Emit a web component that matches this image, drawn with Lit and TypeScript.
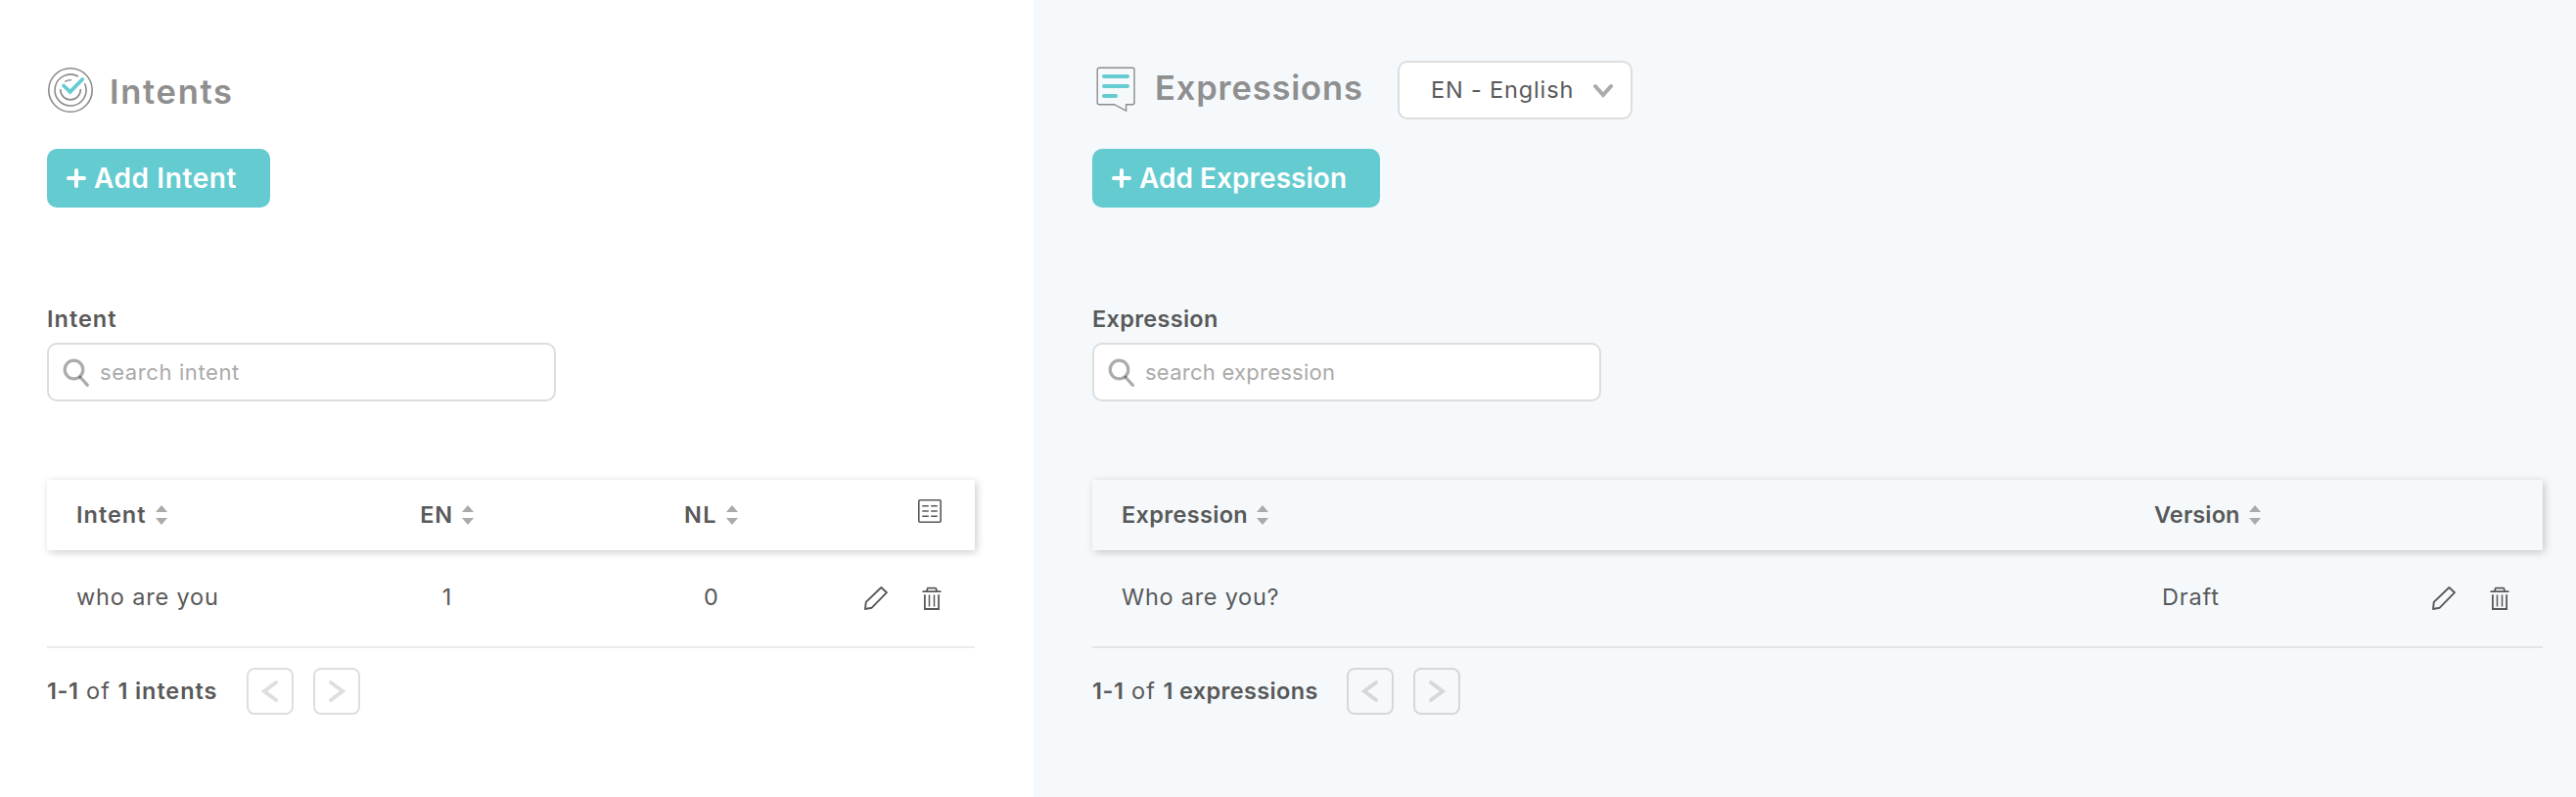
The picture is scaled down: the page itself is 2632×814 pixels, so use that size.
import { LitElement, html, svg, css } from 'lit';
import { customElement, property } from 'lit/decorators.js';
import { styleMap } from 'lit/directives/style-map.js';

/** A run of text with its own tracking. */
const t = (text: string, tracking: number, cls = '') =>
  html`<span class=${cls} style=${styleMap({ letterSpacing: `${tracking}px` })}>${text}</span>`;

const targetIcon = html`<svg width="48" height="48" viewBox="0 0 48 48" fill="none" stroke="#8c8c8c" stroke-width="1.6" stroke-linecap="round">
  <circle cx="24" cy="24" r="22.2" />
  <path d="M38.8 17.8A16 16 0 1 1 31.4 9.8" />
  <path d="M34.3 23.6A10.3 10.3 0 1 1 13.7 23.6M18.8 15.1A10.3 10.3 0 0 1 24.3 13.7" />
  <path d="M17 19.5 23.7 25.9 36.2 13" stroke="#64cbd0" stroke-width="3.8" stroke-linejoin="miter" />
</svg>`;

const noteIcon = html`<svg width="48" height="48" viewBox="0 0 48 48" fill="none" stroke="#8c8c8c" stroke-width="1.4">
  <path d="M7.2 1.2H41a2 2 0 0 1 2 2V36.7a2 2 0 0 1-2 2H34.6V45L22.4 38.7H7.2a2 2 0 0 1-2-2V3.2a2 2 0 0 1 2-2Z" />
  <path d="M12 10H36M12 20H36M12 30H24" stroke="#64cbd0" stroke-width="4" stroke-linecap="round" />
</svg>`;

const plusIcon = html`<svg width="20" height="20" viewBox="0 0 20 20" fill="none" stroke="#fff" stroke-width="4" stroke-linecap="round">
  <path d="M10 2V18M2 10H18" />
</svg>`;

const searchIcon = html`<svg width="28" height="30" viewBox="0 0 28 30" fill="none" stroke="#000" stroke-opacity=".33">
  <circle cx="11.5" cy="11.5" r="9.3" stroke-width="3.2" />
  <path d="M18 19.2 25.4 27.4" stroke-width="3.2" stroke-linecap="round" />
</svg>`;

const pencilIcon = html`<svg width="24" height="24" viewBox="0 0 24 24" fill="none" stroke="#595959" stroke-width="1.9" stroke-linejoin="round">
  <path d="M1 23 1.8 15.9 17.4 1 23 6.2 7.8 21.7Z" />
</svg>`;

const trashIcon = html`<svg width="24" height="24" viewBox="0 0 24 24" fill="none" stroke="#595959" stroke-width="1.8">
  <path d="M2.5 5.2H21.5M6.8 5.2 7.5 2.4Q7.7 1.7 8.5 1.7H15.5Q16.3 1.7 16.5 2.4L17.2 5.2" />
  <path d="M4.9 8.3V23H19.1V8.3" />
  <path d="M9.5 8.6V20.5M14.5 8.6V20.5" stroke-width="1.5" />
</svg>`;

const columnsIcon = html`<svg width="24" height="24" viewBox="0 0 24 24" fill="none" stroke="#595959" stroke-width="1.6">
  <rect x=".8" y=".8" width="22.4" height="22.4" rx="1.2" />
  <path d="M4.3 6.7H10.8M13.2 6.7H19.8M4.3 12H10.8M13.2 12H19.8M4.3 17.2H10.8M13.2 17.2H19.8" />
</svg>`;

const sortIcon = html`<svg width="12" height="20" viewBox="0 0 12 20" fill="#aaa">
  <path d="M6 0 12 7H0ZM0 13H12L6 20Z" />
</svg>`;

const chevron = (points: string) => html`<svg width="20" height="24" viewBox="0 0 20 24" fill="none"
  stroke="currentColor" stroke-width="4" stroke-linecap="round">${svg`<path d=${points} />`}</svg>`;

const base = css`
  * { box-sizing: border-box; }
  svg { display: block; flex: none; }
  span { white-space: nowrap; }
`;

@customElement('add-button')
class AddButton extends LitElement {
  @property() label = '';
  @property({ type: Number }) tracking = 0;

  static styles = [base, css`
    :host { display: block; width: fit-content; min-width: 228px; }
    .button {
      display: flex; align-items: center; gap: 8px; width: 100%; height: 60px; padding: 0 34px 0 20px;
      border: 0; border-radius: 10px; background: #64cbd0; color: #fff;
      font: 600 28px/60px Inter, sans-serif;
    }
  `];

  render() {
    return html`<button class="button">${plusIcon}${t(this.label, this.tracking)}</button>`;
  }
}

@customElement('search-field')
class SearchField extends LitElement {
  @property() label = '';
  @property() hint = '';
  @property({ type: Number }) tracking = 0;
  @property({ type: Number }) hintTracking = 0;

  static styles = [base, css`
    :host { display: block; width: 520px; }
    .label { display: block; height: 30px; margin-bottom: 9px; font: 600 23.5px/30px Inter, sans-serif; color: #595959; }
    .box {
      display: flex; align-items: center; gap: 10px; height: 60px; padding: 0 14px;
      border: 2px solid #ddd; border-radius: 10px; background: #fff;
    }
    .icon { padding-top: 1px; }
    .input {
      flex: 1; min-width: 0; height: 54px; padding: 0; border: 0; outline: 0; background: none;
      font: 400 22px Inter, sans-serif;
    }
    .input::placeholder { color: #aaa; opacity: 1; }
  `];

  render() {
    return html`
      <label class="label">${t(this.label, this.tracking)}</label>
      <div class="box">
        <div class="icon">${searchIcon}</div>
        <input class="input" placeholder=${this.hint} style=${styleMap({ letterSpacing: `${this.hintTracking}px` })} />
      </div>`;
  }
}

@customElement('page-bar')
class PageBar extends LitElement {
  @property() noun = '';
  @property({ type: Number }) tracking = 0;
  @property({ type: Number }) summaryWidth = 0;

  static styles = [base, css`
    :host { display: flex; align-items: center; height: 48px; font: 400 23.5px/48px Inter, sans-serif; color: #595959; }
    .summary { display: flex; gap: 7.5px; flex: none; }
    .strong { font-weight: 600; }
    .pages { display: flex; gap: 20px; }
    .page {
      display: grid; place-items: center; width: 48px; height: 48px; padding: 0;
      border: 2px solid rgba(0, 0, 0, .13); border-radius: 8px; background: none; color: rgba(0, 0, 0, .13);
    }
  `];

  render() {
    return html`
      <div class="summary" style=${styleMap({ width: `${this.summaryWidth}px` })}>
        ${t('1-1', 0.6, 'strong')} ${t('of', 1)} ${t(`1 ${this.noun}`, this.tracking, 'strong')}
      </div>
      <div class="pages">
        <button class="page">${chevron('M16 3 4 12 16 21')}</button>
        <button class="page">${chevron('M4 3 16 12 4 21')}</button>
      </div>`;
  }
}

@customElement('app-root')
class AppRoot extends LitElement {
  static styles = [base, css`
    :host {
      display: grid; grid-template-columns: 1056px 1fr; height: 814px;
      font: 400 23.5px/30px Inter, sans-serif; color: #595959; background: #fff;
    }
    .panel { padding: 62px 60px 0 48px; min-width: 0; }
    .expressions { padding: 62px 34px 0 60px; background: #f5f9fc; }
    .heading { display: flex; align-items: center; height: 60px; margin-bottom: 30px; }
    .title { margin: 4px 0 0 16px; font: 600 34.5px/40px Inter, sans-serif; color: #8f8f8f; }
    .expressions .title { margin: 0 0 4px 16px; width: 248px; }
    .select {
      display: flex; align-items: center; justify-content: space-between; width: 240px; height: 60px;
      padding: 0 18px 0 32px; border: 2px solid #ddd; border-radius: 10px; background: #fff;
    }
    .caret { color: #aaa; }
    .search { margin: 99px 0 80px; }
    .row { display: grid; grid-template-columns: 274px 270px 270px 134px; align-items: center; height: 100px; padding-bottom: 2px; border-bottom: 2px solid rgba(0, 0, 0, .075); }
    .expressions .row { grid-template-columns: 1085px 1fr; }
    .expressions .body { grid-template-columns: 1085px 1fr auto; }
    .head { height: 72px; padding: 0; border: 0; font-weight: 600; box-shadow: 2px 2px 8px rgba(0, 0, 0, .2); }
    .cell { display: flex; align-items: center; gap: 9px; }
    .first { padding-left: 30px; }
    .middle { justify-content: center; padding-right: 1px; }
    .draft { padding-left: 8px; }
    .actions { display: flex; justify-content: flex-end; gap: 33px; padding: 2px 32px 0 0; }
    .settings { padding: 0 34px 8px 0; }
    .pager { margin-top: 20px; }
  `];

  private head(label: string, tracking: number, cls = '') {
    return html`<div class="cell ${cls}">${t(label, tracking)}${sortIcon}</div>`;
  }

  render() {
    const actions = html`<div class="actions">${pencilIcon}${trashIcon}</div>`;
    return html`
      <section class="panel">
        <div class="heading">${targetIcon}<h1 class="title">${t('Intents', 1.7)}</h1></div>
        <add-button label="Add Intent" tracking="0.6"></add-button>
        <search-field class="search" label="Intent" tracking="1" hint="search intent" hintTracking="0.6"></search-field>
        <div class="row head">
          ${this.head('Intent', 1, 'first')}
          ${this.head('EN', 0.8, 'middle')}
          ${this.head('NL', 1.4, 'middle')}
          <div class="actions settings">${columnsIcon}</div>
        </div>
        <div class="row body">
          <div class="cell first">${t('who are you', 0.84)}</div>
          <div class="cell middle">${t('1', 0)}</div>
          <div class="cell middle">${t('0', 0)}</div>
          ${actions}
        </div>
        <page-bar class="pager" noun="intents" tracking="0.9" summaryWidth="204"></page-bar>
      </section>
      <section class="panel expressions">
        <div class="heading">
          ${noteIcon}<h1 class="title">${t('Expressions', 0.85)}</h1>
          <div class="select">${t('EN - English', 0.85)}<span class="caret">${chevron('M2 8 10 17 18 8')}</span></div>
        </div>
        <add-button label="Add Expression" tracking="0.03"></add-button>
        <search-field class="search" label="Expression" tracking="0.3" hint="search expression" hintTracking="0.25"></search-field>
        <div class="row head">
          ${this.head('Expression', 0.34, 'first')}
          ${this.head('Version', 0.12)}
        </div>
        <div class="row body">
          <div class="cell first">${t('Who are you?', 0.74)}</div>
          <div class="cell draft">${t('Draft', 0.85)}</div>
          ${actions}
        </div>
        <page-bar class="pager" noun="expressions" tracking="0.36" summaryWidth="260"></page-bar>
      </section>`;
  }
}
